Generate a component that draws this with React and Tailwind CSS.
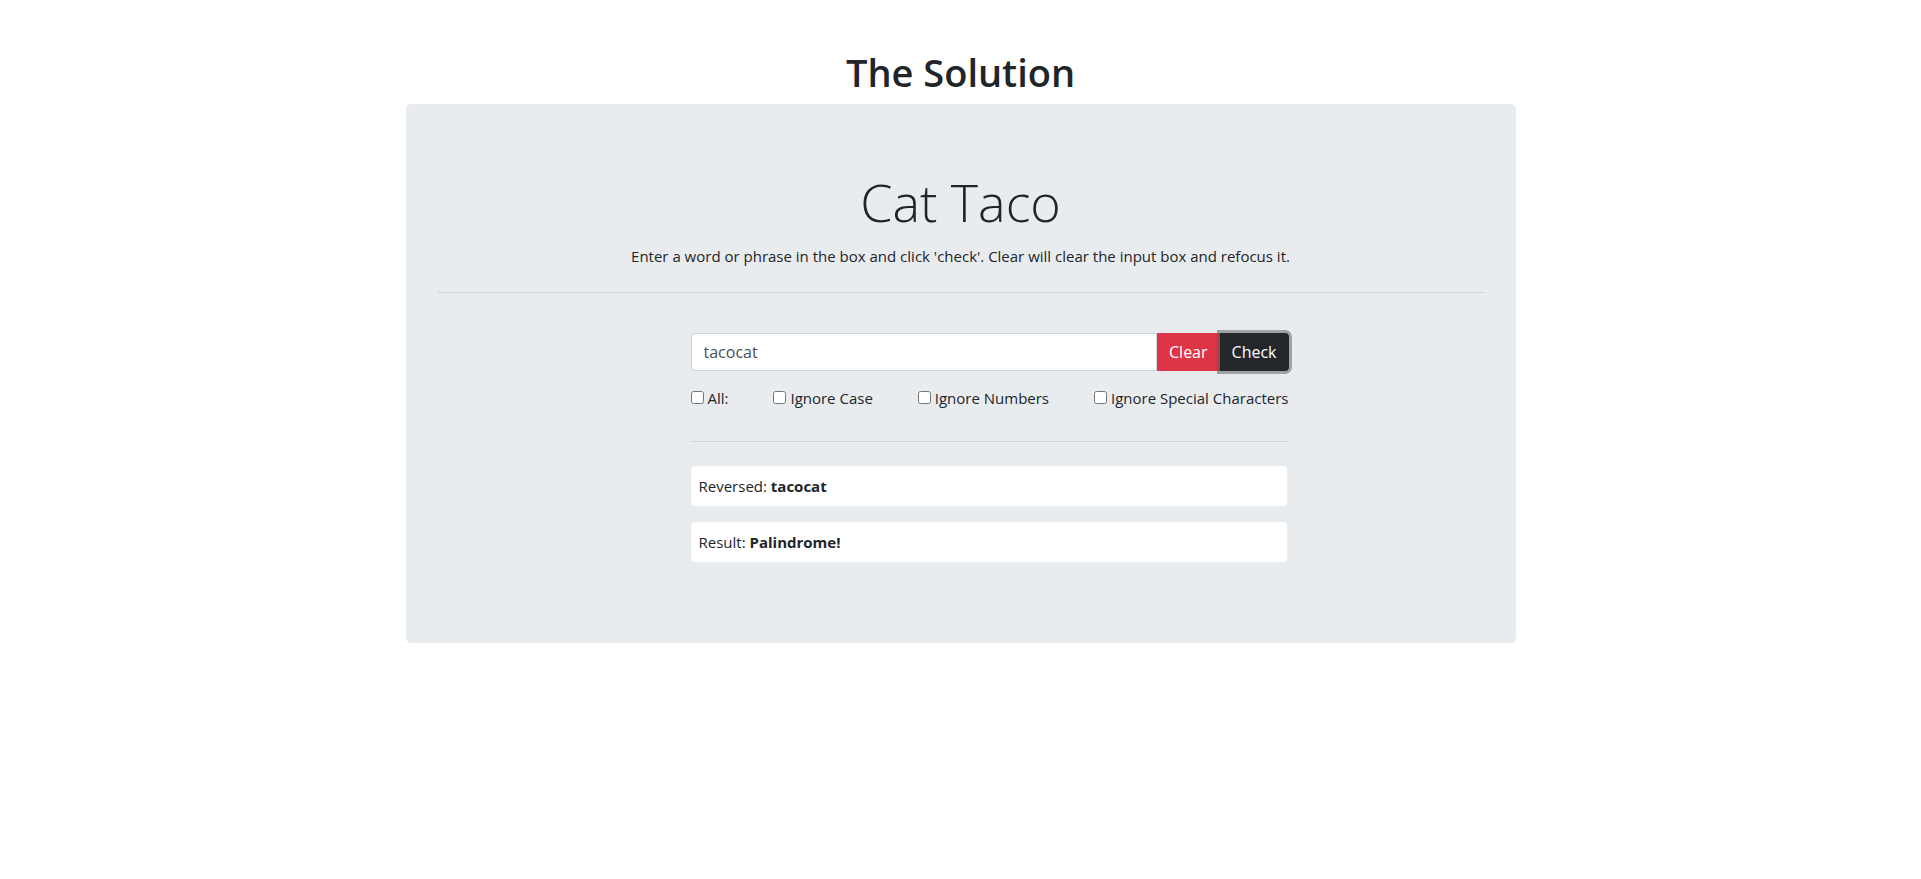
import { useState } from 'react';

const App = () => {
  const [text, setText] = useState('tacocat');

  return (
    <div className="min-h-screen bg-white pt-12 text-[#212529] font-['Open_Sans','Noto_Sans',sans-serif]">
      <div className="mx-auto w-[1110px]">
        <h1 className="mb-2 text-center text-[38px] font-semibold leading-[48px]">The Solution</h1>

        <div className="rounded-[5px] bg-[#e9ecef] px-8 pt-16 pb-[81px]">
          <h2 className="text-center text-[52px] font-light leading-[67px]">Cat Taco</h2>
          <p className="mt-[10px] text-center text-[15px] leading-normal">
            Enter a word or phrase in the box and click 'check'. Clear will clear the input box and refocus it.
          </p>
          <hr className="mt-6 mb-10 border-0 border-t border-black/10" />

          <div className="ml-[253px] w-[598px]">
            {/* input group */}
            <div className="flex h-[38px]">
              <input
                value={text}
                onChange={(e) => setText(e.target.value)}
                className="min-w-0 flex-1 rounded-l-[4px] border border-[#ced4da] bg-white px-3 text-base text-[#495057] outline-none"
              />
              <button className="bg-[#dc3545] px-3 text-base text-white">Clear</button>
              <button className="rounded-r-[4px] bg-[#23272b] px-3 text-base text-white shadow-[0_0_0_3px_rgba(82,88,93,0.5)]">
                Check
              </button>
            </div>

            {/* options */}
            <div className="mt-4 flex items-center justify-between text-[15px]">
              {['All:', 'Ignore Case', 'Ignore Numbers', 'Ignore Special Characters'].map((label) => (
                <label key={label} className="flex items-center gap-1">
                  <input type="checkbox" className="h-[13px] w-[13px]" />
                  {label}
                </label>
              ))}
            </div>

            <hr className="mt-[32px] mb-6 border-0 border-t border-black/10" />

            <div className="flex w-[596px] flex-col gap-4">
              <div className="flex h-10 items-center rounded-[4px] bg-white px-2 text-[15px]">
                Reversed:&nbsp;<b>tacocat</b>
              </div>
              <div className="flex h-10 items-center rounded-[4px] bg-white px-2 text-[15px]">
                Result:&nbsp;<b>Palindrome!</b>
              </div>
            </div>
          </div>
        </div>
      </div>
    </div>
  );
};

export default App;
